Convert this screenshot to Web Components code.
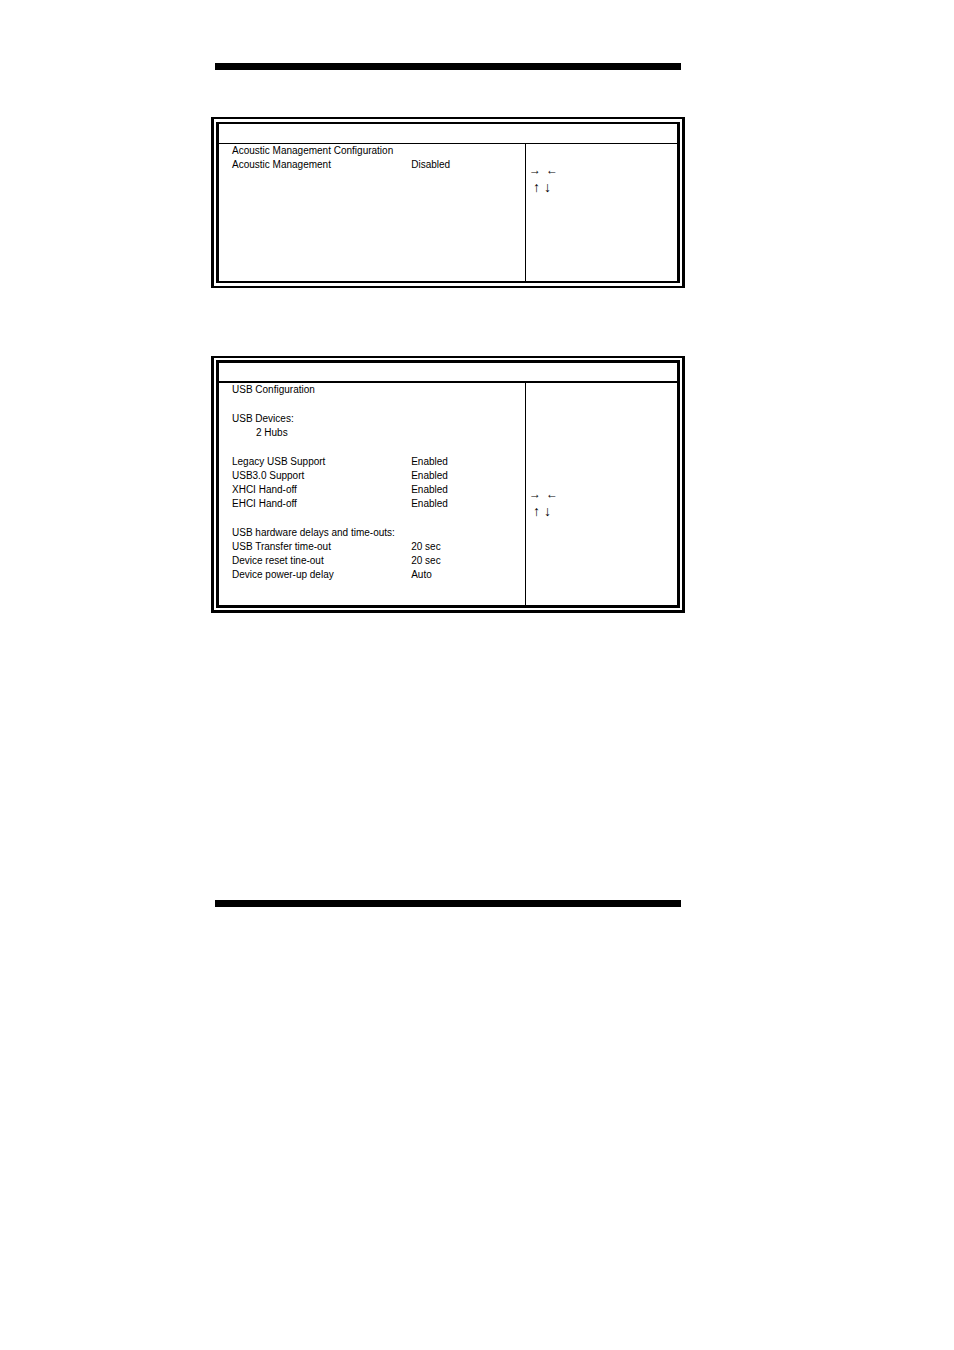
<!DOCTYPE html>
<html lang="en">
<head>
<meta charset="utf-8">
<meta name="viewport" content="width=device-width, initial-scale=1">
<title>BIOS Setup</title>
<style>
    body{
        margin: 0;
        background: #fff;
        color: #000;
        font-family: "Liberation Sans", Arial, sans-serif;
        font-size: 10px;
    }
    .usb{
        --frame-top: 2px;
        --frame-bottom: 3px;
        --frame-inner: 3px;
        --frame-gap: 2px;
        --rule: 2px;
        --title-height: 18px;
        --body-height: 222px;
        --keys-top: 103px;
        margin: 68px 0 287px;
    }
</style>
</head>
<body>
<manual-page>
    <setup-panel>
        <setup-table name="acoustic"></setup-table>
        <key-legend slot="help"></key-legend>
    </setup-panel>
    <setup-panel class="usb">
        <setup-table name="usb"></setup-table>
        <key-legend slot="help"></key-legend>
    </setup-panel>
</manual-page>

<script>
// each group is a block of rows, [label, value, indented]
const settings = {
    acoustic: [
        [
            ['Acoustic Management Configuration'],
            ['Acoustic Management', 'Disabled']
        ]
    ],
    usb: [
        [
            ['USB Configuration']
        ],
        [
            ['USB Devices:'],
            ['2 Hubs', '', true]
        ],
        [
            ['Legacy USB Support', 'Enabled'],
            ['USB3.0 Support', 'Enabled'],
            ['XHCI Hand-off', 'Enabled'],
            ['EHCI Hand-off', 'Enabled']
        ],
        [
            ['USB hardware delays and time-outs:'],
            ['USB Transfer time-out', '20 sec'],
            ['Device reset tine-out', '20 sec'],
            ['Device power-up delay', 'Auto']
        ]
    ]
}

class ManualPage extends HTMLElement{
    constructor() {
        super()
        this.attachShadow({ mode: 'open' })
    }
    connectedCallback() {
        this.shadowRoot.innerHTML = `
            <style>
                :host{
                    display: grid;
                    grid-template-columns: 211fr 474fr 269fr;
                    padding: 63px 0;
                }
                main{
                    grid-column: 2;
                    min-width: 0;
                }
                .bar{
                    height: 7px;
                    margin: 0 4px;
                    background: #000;
                }
                .bar--top{
                    margin-bottom: 47px;
                }
            </style>
            <main>
                <div class="bar bar--top"></div>
                <slot></slot>
                <div class="bar"></div>
            </main>
        `
    }
}

class SetupPanel extends HTMLElement{
    constructor() {
        super()
        this.attachShadow({ mode: 'open' })
    }
    connectedCallback() {
        this.shadowRoot.innerHTML = `
            <style>
                :host{
                    display: block;
                    border: solid #000;
                    border-width: var(--frame-top, 2px) 3px var(--frame-bottom, 2px);
                    padding: var(--frame-gap, 3px) 2px;
                }
                .frame{
                    border: solid #000;
                    border-width: var(--frame-inner, 2px) 3px;
                }
                .title{
                    height: var(--title-height, 19px);
                    border-bottom: var(--rule, 1px) solid #000;
                }
                .body{
                    display: grid;
                    grid-template-columns: 306fr 152fr;
                    min-height: var(--body-height, 137px);
                }
                .options{
                    padding: 0 13px;
                }
                .help{
                    border-left: 1px solid #000;
                    padding: var(--keys-top, 18px) 3px 0;
                }
            </style>
            <section class="frame">
                <div class="title"></div>
                <div class="body">
                    <div class="options"><slot></slot></div>
                    <div class="help"><slot name="help"></slot></div>
                </div>
            </section>
        `
    }
}

class SetupTable extends HTMLElement{
    constructor() {
        super()
        this.attachShadow({ mode: 'open' })
    }
    getRow([label, value, indented]) {
        if( !value ) {
            return `<tr><td colspan="2" class="${indented ? 'indented' : ''}">${label}</td></tr>`
        }
        return `<tr><td>${label}</td><td>${value}</td></tr>`
    }
    connectedCallback() {
        const groups = settings[this.getAttribute('name')]
        this.shadowRoot.innerHTML = `
            <style>
                :host{
                    display: block;
                }
                table{
                    width: 100%;
                    table-layout: fixed;
                    border-collapse: collapse;
                    line-height: 14px;
                }
                col:first-child{
                    width: 64%;
                }
                td{
                    padding: 0;
                    white-space: nowrap;
                }
                .indented{
                    padding-left: 24px;
                }
                tbody + tbody::before{
                    content: "";
                    display: table-row;
                    height: 15px;
                }
            </style>
            <table>
                <colgroup><col><col></colgroup>
                ${groups.map(rows => `<tbody>${rows.map(this.getRow).join('')}</tbody>`).join('')}
            </table>
        `
    }
}

class KeyLegend extends HTMLElement{
    constructor() {
        super()
        this.attachShadow({ mode: 'open' })
    }
    connectedCallback() {
        this.shadowRoot.innerHTML = `
            <style>
                :host{
                    display: block;
                    font-family: "Liberation Serif", "Times New Roman", serif;
                    font-size: 12px;
                    line-height: 17px;
                }
                div{
                    display: flex;
                    gap: 5px;
                }
                .vertical{
                    gap: 4px;
                    padding-left: 4px;
                    font-size: 14px;
                }
            </style>
            <div><span>→</span><span>←</span></div>
            <div class="vertical"><span>↑</span><span>↓</span></div>
        `
    }
}

customElements.define('manual-page', ManualPage)
customElements.define('setup-panel', SetupPanel)
customElements.define('setup-table', SetupTable)
customElements.define('key-legend', KeyLegend)
</script>
</body>
</html>
